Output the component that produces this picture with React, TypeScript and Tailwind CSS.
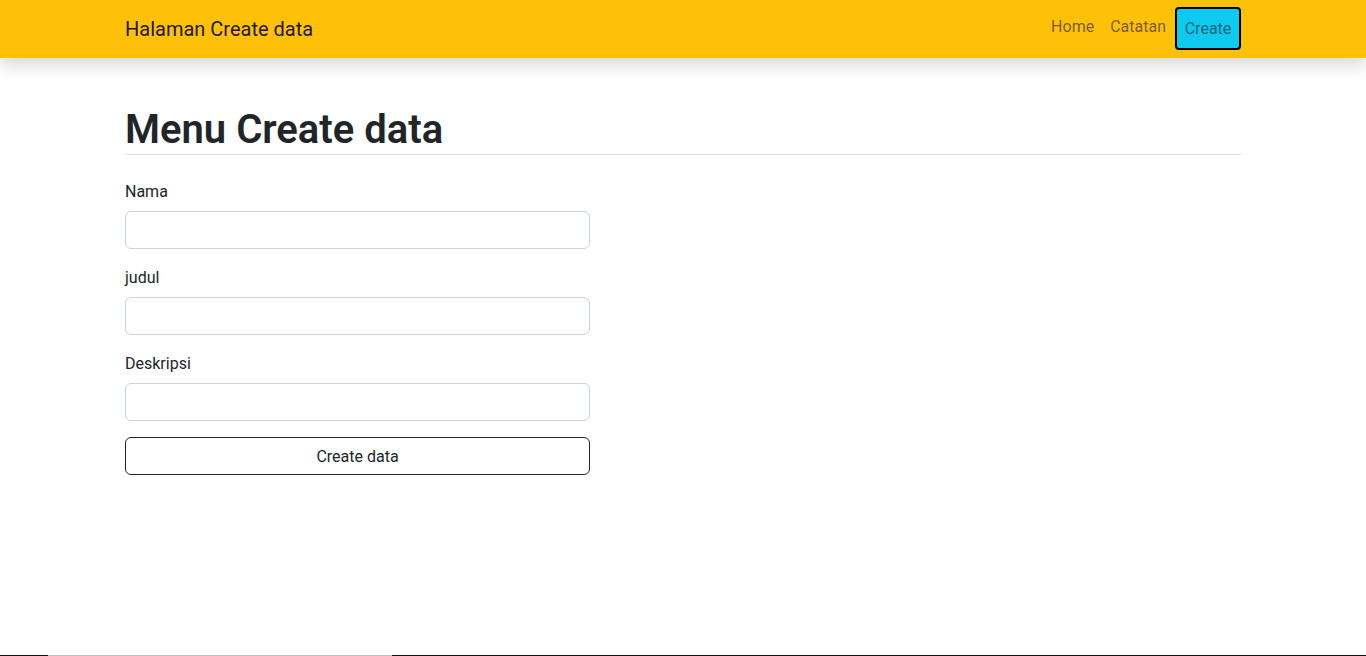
import React from 'react';

const fields = ['Nama', 'judul', 'Deskripsi'];

function App(): JSX.Element {
  return (
    <div
      className="min-h-[656px] bg-white text-[#212529] flex flex-col"
      style={{ fontFamily: '"Segoe UI", Roboto, "Noto Sans", sans-serif' }}
    >
      <nav className="bg-[#ffc107] h-[58px] shadow-[0_8px_16px_rgba(0,0,0,0.15)] relative z-10">
        <div className="mx-auto w-[1116px] h-full flex items-center justify-between">
          <span className="text-[20px] leading-[30px] text-black/90">Halaman Create data</span>
          <div className="flex items-center">
            <a className="px-2 text-[16px] leading-6 text-black/55 mb-[5px]">Home</a>
            <a className="px-2 text-[16px] leading-6 text-black/55 mb-[5px]">Catatan</a>
            <a className="ml-[1px] mb-[2px] pt-[2px] h-[43px] w-[66px] flex items-center justify-center bg-[#0dcaf0] border-2 border-black rounded-[4px] text-[16px] text-black/55">
              Create
            </a>
          </div>
        </div>
      </nav>

      <main className="mx-auto w-[1116px] pt-[46px] flex-1">
        <h1 className="text-[40px] leading-[48px] font-semibold border-b border-[#dee2e6] pt-[2px]">
          Menu Create data
        </h1>
        <form className="w-[465px] pt-[24px]">
          {fields.map((f) => (
            <div key={f} className="mb-4">
              <label className="block pt-[1px] mb-[7px] text-[16px] leading-6">{f}</label>
              <input
                type="text"
                className="block w-full h-[38px] border border-[#ced4da] rounded-[6px] px-3 bg-white"
              />
            </div>
          ))}
          <button
            type="button"
            className="w-full h-[38px] pt-[1px] border border-[#212529] rounded-[6px] text-[16px] text-[#212529]"
          >
            Create data
          </button>
        </form>
      </main>

      <div className="flex h-px">
        <div className="w-[48px] bg-[#111]" />
        <div className="w-[344px] bg-[#bdbdbd]" />
        <div className="flex-1 bg-[#111]" />
      </div>
    </div>
  );
}

export default App;
